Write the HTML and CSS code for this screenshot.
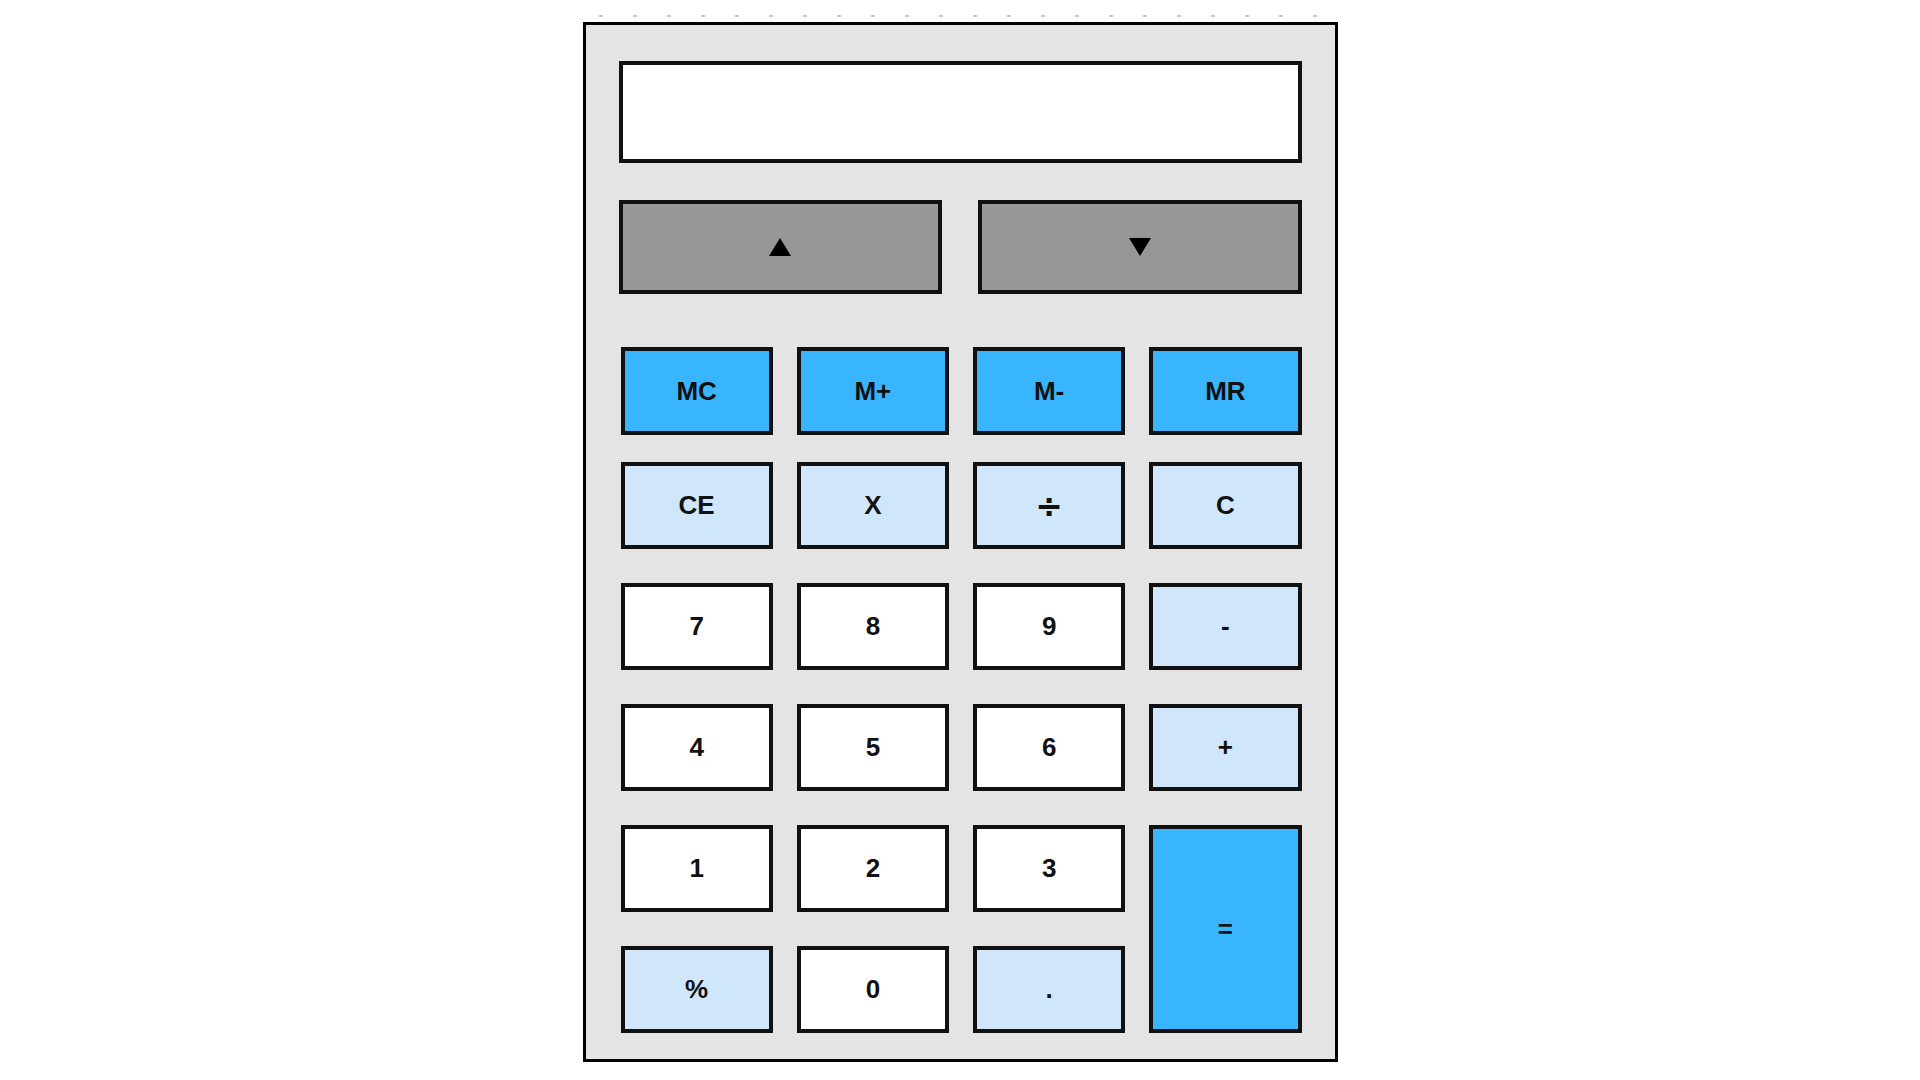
FILE: index.html
```html
<!DOCTYPE html>
<html lang="en">
<head>
<meta charset="utf-8">
<title>Calculator</title>
<link rel="stylesheet" href="styles.css">
</head>
<body>
<div class="page">
  <div class="dashes"></div>
  <div class="calc">
    <div class="display"></div>
    <div class="arrows">
      <button class="arrow"><svg width="22" height="18" viewBox="0 0 22 18"><polygon points="11,0 22,18 0,18" fill="#000"/></svg></button>
      <button class="arrow"><svg width="22" height="18" viewBox="0 0 22 18"><polygon points="0,0 22,0 11,18" fill="#000"/></svg></button>
    </div>
    <div class="memory">
      <button class="key mem">MC</button>
      <button class="key mem">M+</button>
      <button class="key mem">M-</button>
      <button class="key mem">MR</button>
    </div>
    <div class="keys">
      <button class="key op">CE</button>
      <button class="key op">X</button>
      <button class="key op"><span class="divide">÷</span></button>
      <button class="key op">C</button>
      <button class="key num">7</button>
      <button class="key num">8</button>
      <button class="key num">9</button>
      <button class="key op">-</button>
      <button class="key num">4</button>
      <button class="key num">5</button>
      <button class="key num">6</button>
      <button class="key op">+</button>
      <button class="key num">1</button>
      <button class="key num">2</button>
      <button class="key num">3</button>
      <button class="key mem equals">=</button>
      <button class="key op">%</button>
      <button class="key num">0</button>
      <button class="key op">.</button>
    </div>
  </div>
</div>
</body>
</html>
```
FILE: styles.css
```css
html, body {
  margin: 0;
  padding: 0;
  background: #ffffff;
}

.page {
  display: flex;
  flex-direction: column;
  align-items: center;
  padding-top: 15px;
}

.dashes {
  width: 724px;
  height: 2px;
  margin-bottom: 5px;
  margin-left: 2px;
  background: repeating-linear-gradient(90deg, #c8c8c8 0 4px, transparent 4px 34px);
}

.calc {
  width: 755px;
  box-sizing: border-box;
  border: 3px solid #000000;
  background: #e4e4e4;
  padding: 36px 33px 26px 33px;
  font-family: "Liberation Sans", Arial, sans-serif;
}

.display {
  height: 102px;
  box-sizing: border-box;
  border: 4px solid #111111;
  background: #ffffff;
}

.arrows {
  display: flex;
  gap: 36px;
  margin-top: 37px;
}

.arrow {
  flex: 1;
  height: 94px;
  box-sizing: border-box;
  border: 4px solid #111111;
  background: #979797;
  display: flex;
  align-items: center;
  justify-content: center;
  padding: 0;
  margin: 0;
  border-radius: 0;
}

.memory {
  display: grid;
  grid-template-columns: repeat(4, 1fr);
  column-gap: 24px;
  height: 88px;
  margin-top: 53px;
  padding-left: 2px;
}

.keys {
  display: grid;
  grid-template-columns: repeat(4, 1fr);
  grid-template-rows: repeat(5, 87px);
  column-gap: 24px;
  row-gap: 34px;
  margin-top: 27px;
  padding-left: 2px;
}

.key {
  box-sizing: border-box;
  border: 4px solid #111111;
  border-radius: 0;
  margin: 0;
  padding: 0;
  font-family: "Liberation Sans", Arial, sans-serif;
  font-weight: bold;
  font-size: 26px;
  color: #111111;
  display: flex;
  align-items: center;
  justify-content: center;
}

.divide {
  font-family: "DejaVu Sans", sans-serif;
  font-size: 33px;
  line-height: 1;
}

.mem {
  background: #38b5fd;
}

.op {
  background: #d0e6fb;
}

.num {
  background: #ffffff;
}

.equals {
  grid-row: span 2;
}
```
